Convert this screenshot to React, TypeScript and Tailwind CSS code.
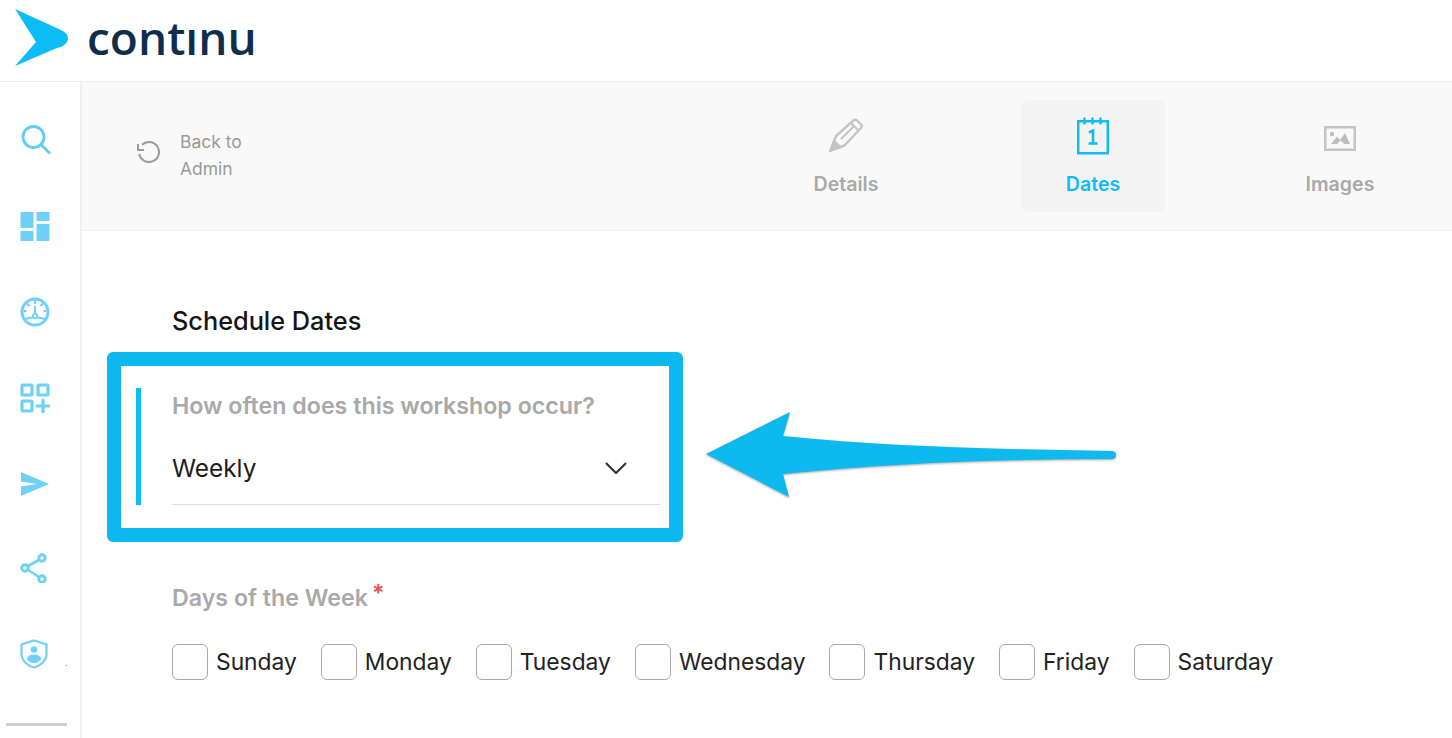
const days = ["Sunday", "Monday", "Tuesday", "Wednesday", "Thursday", "Friday", "Saturday"];

function Logo() {
	return (
		<svg width="56" height="60" viewBox="14 8 56 60" className="-mt-[6px] shrink-0">
			<path d="M15 9L61 30Q68 33 68 39Q67 46 57 48L15 66L36 42Z" fill="#0cbdf5" />
		</svg>
	);
}

function SearchIcon() {
	return (
		<svg width="30" height="30" viewBox="0 0 30 30" fill="none" stroke="#62cdf7" strokeWidth="2.8">
			<circle cx="12.5" cy="12" r="10.5" />
			<path d="M20 19.5L29 28.5" />
		</svg>
	);
}

function DashIcon() {
	return (
		<svg width="30" height="30" viewBox="0 0 30 30" fill="#6fd1f8">
			<rect x="0.5" y="1" width="13" height="16" />
			<rect x="16.5" y="1" width="13" height="9" />
			<rect x="0.5" y="20" width="13" height="10" />
			<rect x="16.5" y="13" width="13" height="17" />
		</svg>
	);
}

function GaugeIcon() {
	return (
		<svg width="30" height="30" viewBox="0 0 30 30" fill="none" stroke="#6fd1f8" strokeWidth="3">
			<circle cx="15" cy="15" r="13" />
			<path d="M15 3v4M3.5 14h3M26.5 14h-3M7 6.5l2.5 2.5M23 6.5l-2.5 2.5" strokeWidth="2.2" />
			<path d="M15 9v8" strokeWidth="2" />
			<circle cx="15" cy="19" r="2.2" strokeWidth="1.8" />
			<path d="M3.5 22.5Q8 21 12.5 20.5M26.5 22.5Q22 21 17.5 20.5" strokeWidth="2.2" />
		</svg>
	);
}

function AppsIcon() {
	return (
		<svg width="30" height="30" viewBox="0 0 30 30" fill="none" stroke="#6fd1f8" strokeWidth="3.2">
			<rect x="2" y="2" width="10" height="10" rx="1" />
			<rect x="18" y="2" width="10" height="10" rx="1" />
			<rect x="2" y="18" width="10" height="10" rx="1" />
			<path d="M23 17v12M17 23h12" strokeLinecap="round" />
		</svg>
	);
}

function SendIcon() {
	return (
		<svg width="30" height="26" viewBox="0 0 30 26" fill="#6fd1f8">
			<path d="M1 1L29 13L1 25V15.5L17 13L1 10.5Z" />
		</svg>
	);
}

function ShareIcon() {
	return (
		<svg width="30" height="30" viewBox="0 0 30 30" fill="none" stroke="#6fd1f8" strokeWidth="3">
			<circle cx="5" cy="15" r="3.2" />
			<circle cx="22" cy="5" r="3.2" />
			<circle cx="22" cy="26" r="3.2" />
			<path d="M8 13L19 7M8 17L19 24" strokeWidth="2.6" />
		</svg>
	);
}

function ShieldIcon() {
	return (
		<svg width="28" height="30" viewBox="0 0 28 30" fill="none">
			<path d="M14 1.5L26.5 5.5V15C26.5 22 20 27 14 28.5C8 27 1.5 22 1.5 15V5.5Z" stroke="#6fd1f8" strokeWidth="2.2" />
			<circle cx="14" cy="10.5" r="3.3" fill="#6fd1f8" />
			<path d="M7 20.5C7 17 10 15.5 14 15.5C18 15.5 21 17 21 20.5C19 23 16.5 24 14 24C11.5 24 9 23 7 20.5Z" fill="#6fd1f8" />
		</svg>
	);
}

function PencilIcon() {
	return (
		<svg width="34" height="34" viewBox="0 0 34 34" fill="none" stroke="#c4c4c4" strokeWidth="2.4">
			<path d="M1.5 32.5L7 18L24.5 2.5Q26.5 1 28 2.5L32 6.5Q33.5 8.5 32 10L15.5 27.5Z" strokeLinejoin="round" />
			<path d="M22 5L30 13M12 21L25 8" strokeWidth="2" />
			<path d="M1.5 32.5L11 29L5 23Z" fill="#c4c4c4" />
		</svg>
	);
}

function CalendarIcon() {
	return (
		<svg width="32" height="38" viewBox="0 0 32 38" fill="none" stroke="#0cbdf5">
			<rect x="1.25" y="4.25" width="29.5" height="32" strokeWidth="2.5" />
			<path d="M7.5 0.5v7M15.5 0.5v7M23.5 0.5v7" strokeWidth="2.4" />
			<path d="M12 15.5L16 13.5V26M11.5 26.5H20.5" strokeWidth="2.6" />
		</svg>
	);
}

function ImageIcon() {
	return (
		<svg width="32" height="25" viewBox="0 0 32 25" fill="none">
			<rect x="1.25" y="1.25" width="29.5" height="22.5" stroke="#c4c4c4" strokeWidth="2.5" />
			<circle cx="8" cy="8" r="2.2" fill="#bdbdbd" />
			<path d="M7 18L13 10.5L16 14L21 7L26 18H20.5L16.5 14.5L13 18Z" fill="#bdbdbd" />
		</svg>
	);
}

function UndoIcon() {
	return (
		<svg width="26" height="24" viewBox="0 0 26 24" fill="none" stroke="#9a9a9a" strokeWidth="2" className="-mt-[6px]">
			<path d="M6 4.8A10 10 0 1 1 3.2 14" />
			<path d="M2 4V10H8" />
		</svg>
	);
}

function Chevron() {
	return (
		<svg width="22" height="12" viewBox="0 0 22 12" fill="none" stroke="#333333" strokeWidth="2.2">
			<path d="M1 1L11 11L21 1" />
		</svg>
	);
}

function Arrow() {
	return (
		<svg
			width="414"
			height="90"
			viewBox="704 410 414 90"
			className="absolute left-[622px] top-[328px] drop-shadow-[0_1px_1px_rgba(0,0,0,0.35)]"
		>
			<path
				d="M706 454L790 412L783 436C890 447 1000 449 1111 451Q1116 451 1116 455Q1116 459 1111 459C1000 459 890 463 783 474L789 497Z"
				fill="#0db9ee"
			/>
		</svg>
	);
}

export default function App() {
	return (
		<div className="h-[738px] w-[1452px] overflow-hidden bg-white font-['Inter',sans-serif]">
			<header className="flex h-[82px] items-center border-b border-[#ececec] pl-[14px]">
				<Logo />
				<span className="ml-[17px] -mt-[8px] font-['Open_Sans',sans-serif] text-[46px] leading-none font-semibold text-[#0f2e4b]">
					contınu
				</span>
			</header>
			<div className="flex h-[656px]">
				<aside className="relative flex w-[82px] shrink-0 flex-col items-center border-r-2 border-[#f0f0f0] pt-[43px] pr-[10px]">
					<div className="ml-[2px] flex h-[30px] items-center"><SearchIcon /></div>
					<div className="mt-[56px] flex h-[30px] items-center"><DashIcon /></div>
					<div className="mt-[56px] flex h-[30px] items-center"><GaugeIcon /></div>
					<div className="mt-[56px] flex h-[30px] items-center"><AppsIcon /></div>
					<div className="mt-[56px] flex h-[30px] items-center"><SendIcon /></div>
					<div className="mt-[54px] flex h-[30px] items-center"><ShareIcon /></div>
					<div className="mt-[56px] mr-[2px] flex h-[30px] items-center"><ShieldIcon /></div>
					<div className="mt-[54px] ml-[3px] h-[3px] w-[61px] bg-[#cfcfcf]" />
					<span className="absolute left-[66px] top-[583px] h-px w-px bg-[#888888]" />
				</aside>
				<main className="relative min-w-0 flex-1">
					<div className="flex h-[149px] items-start border-b border-[#eeeeee] bg-[#f9f9f9]">
						<div className="flex w-[189px] items-center pt-[46px] pl-[54px]">
							<UndoIcon />
							<span className="ml-[18px] text-[17.5px] leading-[27px] text-[#999999]">
								Back to
								<br />
								Admin
							</span>
						</div>
						<div className="ml-[503px] flex gap-[103px] pt-[18px]">
							<div className="flex h-[112px] w-[144px] flex-col items-center justify-between pt-[18px] pb-[16px]">
								<PencilIcon />
								<span className="text-[19.6px] leading-[24px] font-semibold text-[#a9a9a9]">Details</span>
							</div>
							<div className="flex h-[112px] w-[144px] flex-col items-center justify-between rounded-lg bg-[#f4f4f4] pt-[17px] pb-[16px]">
								<CalendarIcon />
								<span className="text-[19.6px] leading-[24px] font-semibold text-[#0cbdf5]">Dates</span>
							</div>
							<div className="flex h-[112px] w-[144px] flex-col items-center justify-between pt-[26px] pb-[16px]">
								<ImageIcon />
								<span className="text-[19.6px] leading-[24px] font-semibold text-[#a9a9a9]">Images</span>
							</div>
						</div>
					</div>
					<div className="pt-[74px] pl-[25px]">
						<h2 className="pl-[65px] text-[25.3px] leading-[32px] font-medium text-[#151515]">Schedule Dates</h2>
						<div className="mt-[15px] h-[190px] w-[576px] rounded-md border-[14px] border-[#0db9ee] pt-[22px] pl-[15px]">
							<div className="flex h-[117px]">
								<div className="w-[5px] bg-[#0cbdf5]" />
								<div className="ml-[31px] w-[488px] border-b border-[#dddddd]">
									<div className="pt-[4px] text-[23.2px] leading-[29px] font-semibold text-[#a9a9a9]">
										How often does this workshop occur?
									</div>
									<div className="mt-[29px] flex items-center justify-between pr-[33px]">
										<span className="text-[24.4px] leading-[36px] text-[#1c1c1c]">Weekly</span>
										<Chevron />
									</div>
								</div>
							</div>
						</div>
						<div className="mt-[42px] flex items-start pl-[65px] text-[23.2px] leading-[29px] font-semibold text-[#a9a9a9]">
							Days of the Week
							<span className="ml-[4px] -mt-[5px] text-[#ee5544]">*</span>
						</div>
						<div className="mt-[31px] flex gap-[24px] pl-[65px]">
							{days.map((day) => (
								<label key={day} className="flex items-center gap-[8px]">
									<span className="h-[36px] w-[36px] rounded-md border border-[#a8a8a8] bg-white" />
									<span className="text-[22.8px] leading-[36px] text-[#222222]">{day}</span>
								</label>
							))}
						</div>
					</div>
					<Arrow />
				</main>
			</div>
		</div>
	);
}
